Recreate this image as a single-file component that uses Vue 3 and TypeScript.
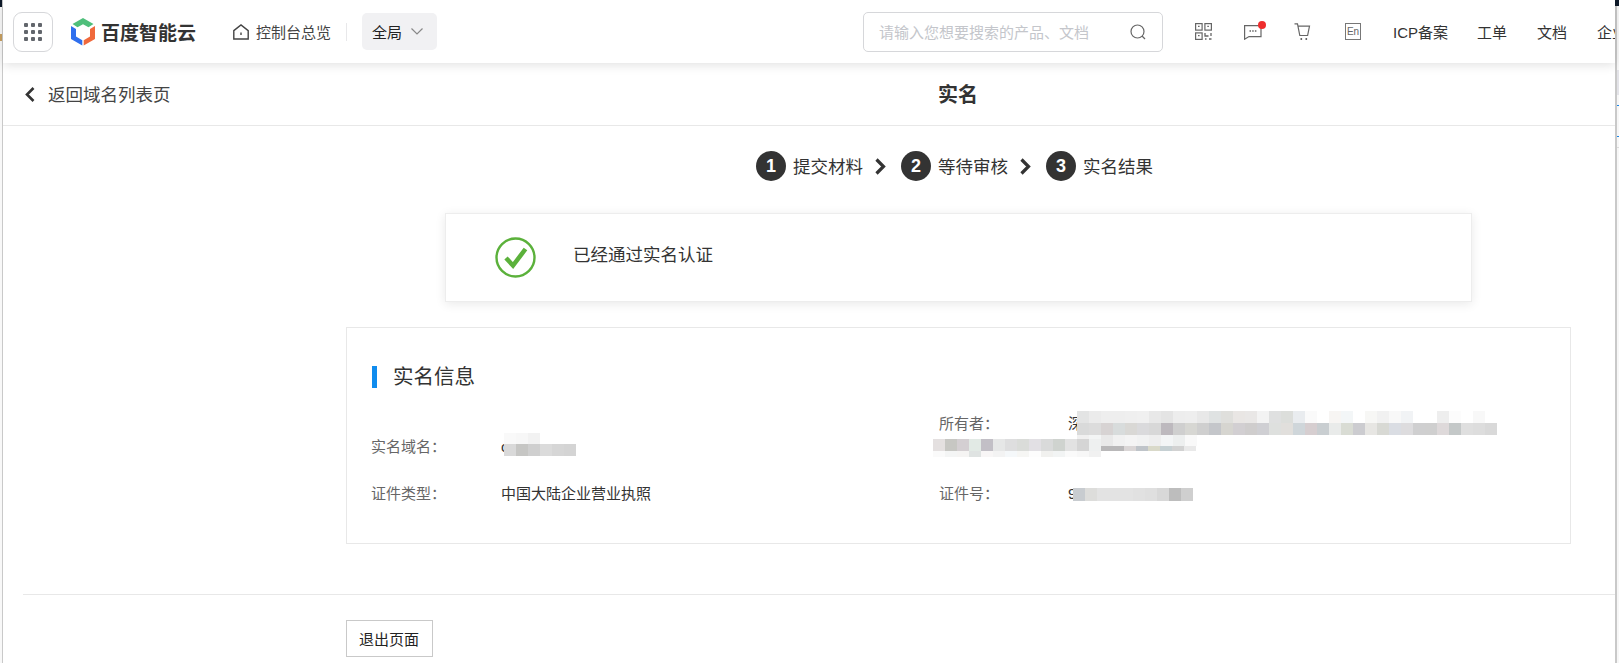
<script setup lang="ts">
interface Mosaic { x: number; y: number; w: number; h: number; cells: string[] }

const mosaics: Mosaic[] = [
  { x: 504, y: 433, w: 12, h: 11, cells: ['f9f9f9', 'f7f7f7', 'f2f2f2'] },
  { x: 504, y: 444, w: 12, h: 12, cells: ['d9d9d9', 'c6c6c4', 'cfcfcf', 'dbdbdb', 'd6d6d6', 'd4d4d4'] },
  {
    x: 1077, y: 411, w: 12, h: 12,
    cells: ['e3e4e4', 'ebebeb', 'eeeeee', 'eeeeee', 'efefef', 'f0f0f0', 'e8e8e8', 'e4e4e4', 'ededed', 'eeeeee', 'e8e8e8', 'dfe2e2', 'dfdfdc', 'e9e6e4', 'e9e7e6', 'f3f3f3', 'dfe0e0', 'dcdedb', 'e9ecef', 'fafafa', 'ffffff', 'f7f5f3', 'f3f6f7', 'ffffff', 'f7f7f5', 'f1f1f1', 'f8f8f8', 'f1f3f5', 'ffffff', 'ffffff', 'eeeeee', 'fcfcfc', 'ffffff', 'f8f8f8'],
  },
  {
    x: 1077, y: 423, w: 12, h: 12,
    cells: ['d9dada', 'dcdcdc', 'd7d3d3', 'd8dcdc', 'd9d8d5', 'dadadc', 'd8d8d8', 'bdb9be', 'cfcfcf', 'd7d7d3', 'cfcfcf', 'c4c6ca', 'd6d5d0', 'd2cfd2', 'cfcdcd', 'cfcfd3', 'dee0de', 'e1dfdc', 'cfd6da', 'd6ced0', 'c9ced1', 'e9ebea', 'd9dcd4', 'ccccd0', 'e7e6e3', 'd8d9d4', 'dadde3', 'dddcde', 'cfcfd0', 'cfcfcf', 'ded9da', 'c4c8c8', 'dfdfdf', 'dddddd', 'd9d9d9'],
  },
  { x: 1077, y: 435, w: 12, h: 11, cells: ['f0f0f0', 'f3f5f5', 'e9e9e9', 'f1f1f1', 'f4f4f4', 'f1f2f2', 'eeeeee', 'f3f5f6', 'edefef', 'f9f9f9'] },
  { x: 1100, y: 446, w: 12, h: 5, cells: ['b9b8b9', 'b9b8b9', 'dad6d6', 'bfc4c9', 'd9d9c9', 'c6d0d3', 'd2d2d2', 'e9e9e9'] },
  { x: 933, y: 439, w: 12, h: 12, cells: ['e4e0e0', 'c7c7c3', 'd4cfd2', 'e2eae5', 'c2bfc6', 'e6e7e7', 'dededf', 'dadcd9', 'e2e0e4', 'd9dada', 'cfd3cf', 'e2e2e2', 'd5d5d5', 'eef0f0'] },
  { x: 933, y: 451, w: 12, h: 6, cells: ['fafafa', 'f4f5f5', 'f5f4f3', 'dfe3e2', 'f8f6f6', 'f3f3f3', 'f5f8fa', 'f6f6f4', 'fdfdfd', 'f1f1ef', 'f2f4f4', 'fafafa', 'f7f7f7', 'f1f1f1'] },
  { x: 1073, y: 488, w: 12, h: 13, cells: ['c8ccd0', 'dddddb', 'e3e3e3', 'e3e3e3', 'e3e3e3', 'e1e1e1', 'dfdfdf', 'd8d8d8', 'bdbdbd', 'cfcfcf'] },
]

const mosaicCells = mosaics.flatMap((m, r) =>
  m.cells.map((c, i) => ({
    key: `${r}-${i}`,
    style: {
      left: `${m.x + i * m.w}px`,
      top: `${m.y}px`,
      width: `${m.w}px`,
      height: `${m.h}px`,
      background: `#${c}`,
    },
  })),
)

const steps = ['提交材料', '等待审核', '实名结果']
const navLinks = ['工单', '文档', '企业']
</script>

<template>
  <div class="page">
    <div class="edge-left"></div>
    <div class="main">
      <header class="topbar">
        <button class="apps" type="button" aria-label="apps">
          <i v-for="n in 9" :key="n"></i>
        </button>
        <svg class="logo" width="24" height="28" viewBox="0 0 24 28">
          <path fill="#4fbf7b" d="M12 0 22.500 6 17.500 9.200 12 6.200 6.500 9.200 1.500 6Z" />
          <path fill="#2f6fee" d="M0 8 5 11V18.500L11.300 22.200V27.500L0 21Z" />
          <path fill="#f0693c" d="M24 8V21L12.700 27.500V22.200L19 18.500V11Z" />
        </svg>
        <span class="brand">百度智能云</span>
        <svg class="home" width="16" height="16" viewBox="0 0 16 16" fill="none" stroke="#444" stroke-width="1.400">
          <path d="M.8 6.600 8 .9l7.200 5.700V15H.8Z" />
          <path d="M8 8.500v2.500" />
        </svg>
        <span class="overview">控制台总览</span>
        <span class="sep"></span>
        <div class="scope">
          <span>全局</span>
          <svg width="12" height="7" viewBox="0 0 12 7" fill="none" stroke="#888" stroke-width="1.200"><path d="m.5.5 5.500 5.500L11.500.5" /></svg>
        </div>
        <div class="search">
          <span>请输入您想要搜索的产品、文档</span>
          <svg width="16" height="16" viewBox="0 0 16 16" fill="none" stroke="#666" stroke-width="1.200">
            <circle cx="7.500" cy="7.500" r="6.500" /><path d="m12 12 3 3" />
          </svg>
        </div>
        <svg class="tool qr" width="17" height="17" viewBox="0 0 17 17" fill="none" stroke="#666" stroke-width="1.200">
          <rect x=".6" y=".6" width="6.500" height="6.500" /><rect x="9.900" y=".6" width="6.500" height="6.500" /><rect x=".6" y="9.900" width="6.500" height="6.500" />
          <path d="M3 3.300h1.600M12.300 3.300h1.600M3 12.600h1.600M10 10v3h3.500M16 10v3M10 16h1.500M14 16h2.500" stroke-width="1.300" />
        </svg>
        <span class="tool msg">
          <svg width="18" height="16" viewBox="0 0 18 16" fill="none" stroke="#666" stroke-width="1.200">
            <path d="M.6 1.600h16.400v11H5L.6 15.200Z" />
            <path d="M5.500 7h1.500M8.200 7h1.500M10.900 7h1.500" stroke-width="1.500" />
          </svg>
          <b class="dot"></b>
        </span>
        <svg class="tool cart" width="17" height="18" viewBox="0 0 17 18" fill="none" stroke="#666" stroke-width="1.200">
          <path d="M.5.800h3l2.300 11.700h7.800l1.900-9.300H4" />
          <path d="M6.500 16h1.600M11.500 16h1.600" stroke-width="2" />
        </svg>
        <span class="tool en">En</span>
        <span class="link icp">ICP备案</span>
        <span v-for="l in navLinks" :key="l" class="link nav">{{ l }}</span>
      </header>

      <div class="subbar">
        <a class="back">
          <svg width="10" height="15" viewBox="0 0 10 15" fill="none" stroke="#333" stroke-width="2.600"><path d="M8.500 1 2 7.500l6.500 6.500" /></svg>
          <span>返回域名列表页</span>
        </a>
        <h1>实名</h1>
      </div>

      <div class="steps">
        <template v-for="(s, i) in steps" :key="s">
          <span class="num">{{ i + 1 }}</span>
          <span class="step-text">{{ s }}</span>
          <svg v-if="i < 2" class="arrow" width="13" height="17" viewBox="0 0 13 17" fill="none" stroke="#333" stroke-width="3.200"><path d="m2.500 1.500 7 7-7 7" /></svg>
        </template>
      </div>

      <section class="alert">
        <svg width="41" height="41" viewBox="0 0 41 41" fill="none">
          <circle cx="20.500" cy="20.500" r="19" stroke="#5bb13b" stroke-width="2.400" />
          <path d="m11 21 7 7.500L30.500 12" stroke="#5bb13b" stroke-width="4.500" />
        </svg>
        <span>已经通过实名认证</span>
      </section>

      <section class="info">
        <h2>实名信息</h2>
        <div class="row">
          <div class="cell left first"><span class="label">实名域名：</span><span class="value">c</span></div>
          <div class="cell right"><span class="label">所有者：</span><span class="value">深</span></div>
        </div>
        <div class="row second">
          <div class="cell left"><span class="label">证件类型：</span><span class="value">中国大陆企业营业执照</span></div>
          <div class="cell right"><span class="label">证件号：</span><span class="value">9</span></div>
        </div>
      </section>

      <div class="footer">
        <button class="exit" type="button">退出页面</button>
      </div>
    </div>
    <div class="edge-right"></div>

    <div class="mosaic">
      <i v-for="c in mosaicCells" :key="c.key" class="px" :style="c.style"></i>
    </div>
  </div>
</template>

<style>
html, body { margin: 0; background: #fff; overflow: hidden; }
</style>

<style scoped>
.page {
  position: relative;
  display: flex;
  width: 1619px;
  height: 663px;
  overflow: hidden;
  background: #fff;
  font-family: "Liberation Sans", "Noto Sans CJK SC", sans-serif;
  color: #333;
}
.edge-left {
  flex: 0 0 3px;
  background:
    linear-gradient(#0f1a2a, #0f1a2a) 0 0 / 2px 7px no-repeat,
    linear-gradient(#c8a060, #c8a060) 0 34px / 2px 7px no-repeat,
    linear-gradient(#c9c9c9, #c9c9c9) 2px 0 / 1px 100% no-repeat,
    #f8f8f8;
}
.edge-right {
  flex: 0 0 4px;
  background:
    linear-gradient(#0f1a2a, #0f1a2a) 0 0 / 100% 6px no-repeat,
    linear-gradient(#c9c9c9, #c9c9c9) 0 0 / 2px 100% no-repeat,
    linear-gradient(#e3e3e8, #e3e3e8) 2px 70px / 2px 25px no-repeat,
    linear-gradient(#1a86e8, #1a86e8) 2px 105px / 2px 1px no-repeat,
    linear-gradient(#1a86e8, #1a86e8) 2px 136px / 2px 1px no-repeat,
    linear-gradient(#dcdcdc, #dcdcdc) 2px 147px / 2px 1px no-repeat,
    #f7f7f7;
}
.main { flex: 1; min-width: 0; }

.topbar {
  position: relative;
  z-index: 2;
  display: flex;
  align-items: center;
  height: 63px;
  background: #fff;
  box-shadow: 0 2px 10px rgba(0, 0, 0, 0.12);
  overflow: hidden;
  white-space: nowrap;
}
.apps {
  flex: none;
  display: grid;
  grid-template-columns: repeat(3, 4px);
  grid-auto-rows: 4px;
  gap: 3px;
  align-content: center;
  justify-content: center;
  width: 40px;
  height: 40px;
  margin-left: 10px;
  padding: 0;
  background: #fff;
  border: 1px solid #d6d7da;
  border-radius: 9px;
}
.apps i { background: #62666c; border-radius: 1px; }
.logo { flex: none; margin-left: 18px; }
.brand { margin-left: 6px; width: 95px; font-size: 19px; font-weight: 700; color: #333; }
.home { flex: none; margin-left: 37px; }
.overview { margin-left: 7px; font-size: 15px; color: #444; }
.sep { flex: none; width: 1px; height: 18px; margin-left: 15px; background: #e8e8ea; }
.scope {
  flex: none;
  display: flex;
  align-items: center;
  gap: 9px;
  box-sizing: border-box;
  width: 75px;
  height: 37px;
  margin-left: 15px;
  padding-left: 10px;
  background: #f1f1f3;
  border-radius: 5px;
  font-size: 15px;
  color: #222;
}
.search {
  flex: none;
  display: flex;
  align-items: center;
  justify-content: space-between;
  box-sizing: border-box;
  width: 300px;
  height: 40px;
  margin-left: 426px;
  padding: 0 16px 0 15px;
  border: 1px solid #d6d7da;
  border-radius: 5px;
  font-size: 15px;
  color: #c4c6cb;
}
.tool { flex: none; }
.qr { margin-left: 32px; }
.msg { position: relative; display: flex; margin-left: 32px; }
.dot {
  position: absolute;
  top: -3px;
  right: -4px;
  width: 8px;
  height: 8px;
  border-radius: 50%;
  background: #ee2d2d;
}
.cart { margin-left: 32px; }
.en {
  box-sizing: border-box;
  width: 16px;
  height: 17px;
  margin-left: 34px;
  border: 1px solid #777;
  font-size: 10px;
  line-height: 15px;
  text-align: center;
  color: #666;
}
.link { flex: none; font-size: 15px; color: #333; margin-top: -1px; }
.icp { margin-left: 32px; margin-right: -1px; }
.nav { margin-left: 30px; }

.subbar {
  display: flex;
  align-items: center;
  box-sizing: border-box;
  height: 63px;
  border-bottom: 1px solid #e8e8e8;
}
.back {
  display: flex;
  align-items: center;
  gap: 13px;
  width: 168px;
  margin-left: 22px;
  font-size: 17.5px;
  color: #444;
  white-space: nowrap;
}
.back span { margin-top: -2px; }
.subbar h1 { margin: -2px 0 0 745px; font-size: 20px; font-weight: 700; color: #333; }

.steps {
  display: flex;
  align-items: center;
  height: 30px;
  margin: 25px 0 0 753px;
}
.num {
  flex: none;
  width: 30px;
  height: 30px;
  border-radius: 50%;
  background: #333;
  color: #fff;
  font-size: 18px;
  font-weight: 700;
  line-height: 30px;
  text-align: center;
}
.step-text { width: 72px; margin: -2px 0 0 7px; font-size: 17.5px; color: #333; }
.arrow { flex: none; margin: 0 14px 0 9px; }

.alert {
  display: flex;
  align-items: center;
  box-sizing: border-box;
  width: 1027px;
  height: 89px;
  margin: 32px 0 0 442px;
  padding-left: 49px;
  background: #fff;
  border: 1px solid #ededed;
  box-shadow: 0 2px 10px rgba(0, 0, 0, 0.09);
  font-size: 17.5px;
  color: #333;
}
.alert span { margin: -8px 0 0 37px; }

.info {
  box-sizing: border-box;
  width: 1225px;
  height: 217px;
  margin: 25px 0 0 343px;
  padding: 38px 25px 0;
  border: 1px solid #e8e8e8;
}
.info h2 {
  height: 22px;
  margin: 0 0 22px;
  padding-left: 16px;
  border-left: 5px solid #108cee;
  font-size: 20.5px;
  font-weight: 400;
  line-height: 22px;
  color: #333;
}
.row { display: flex; height: 56px; font-size: 15px; line-height: 28px; }
.second { height: 28px; margin-top: 14px; }
.cell { display: flex; }
.left { width: 566px; }
.first { padding-top: 23px; }
.label { flex: none; color: #666; }
.left .label { width: 130px; margin-left: -1px; }
.right { margin-left: 1px; }
.right .label { width: 129px; }
.value { color: #333; }

.footer { margin-top: 50px; margin-left: 20px; border-top: 1px solid #e8e8e8; }
.exit {
  display: block;
  width: 87px;
  height: 37px;
  margin: 25px 0 0 323px;
  padding: 0 1px 0 0;
  background: #fff;
  border: 1px solid #c9c9c9;
  font: 15px "Liberation Sans", "Noto Sans CJK SC", sans-serif;
  color: #222;
}
.mosaic { position: absolute; inset: 0; filter: blur(0.4px); pointer-events: none; }
.px { position: absolute; display: block; }
</style>
